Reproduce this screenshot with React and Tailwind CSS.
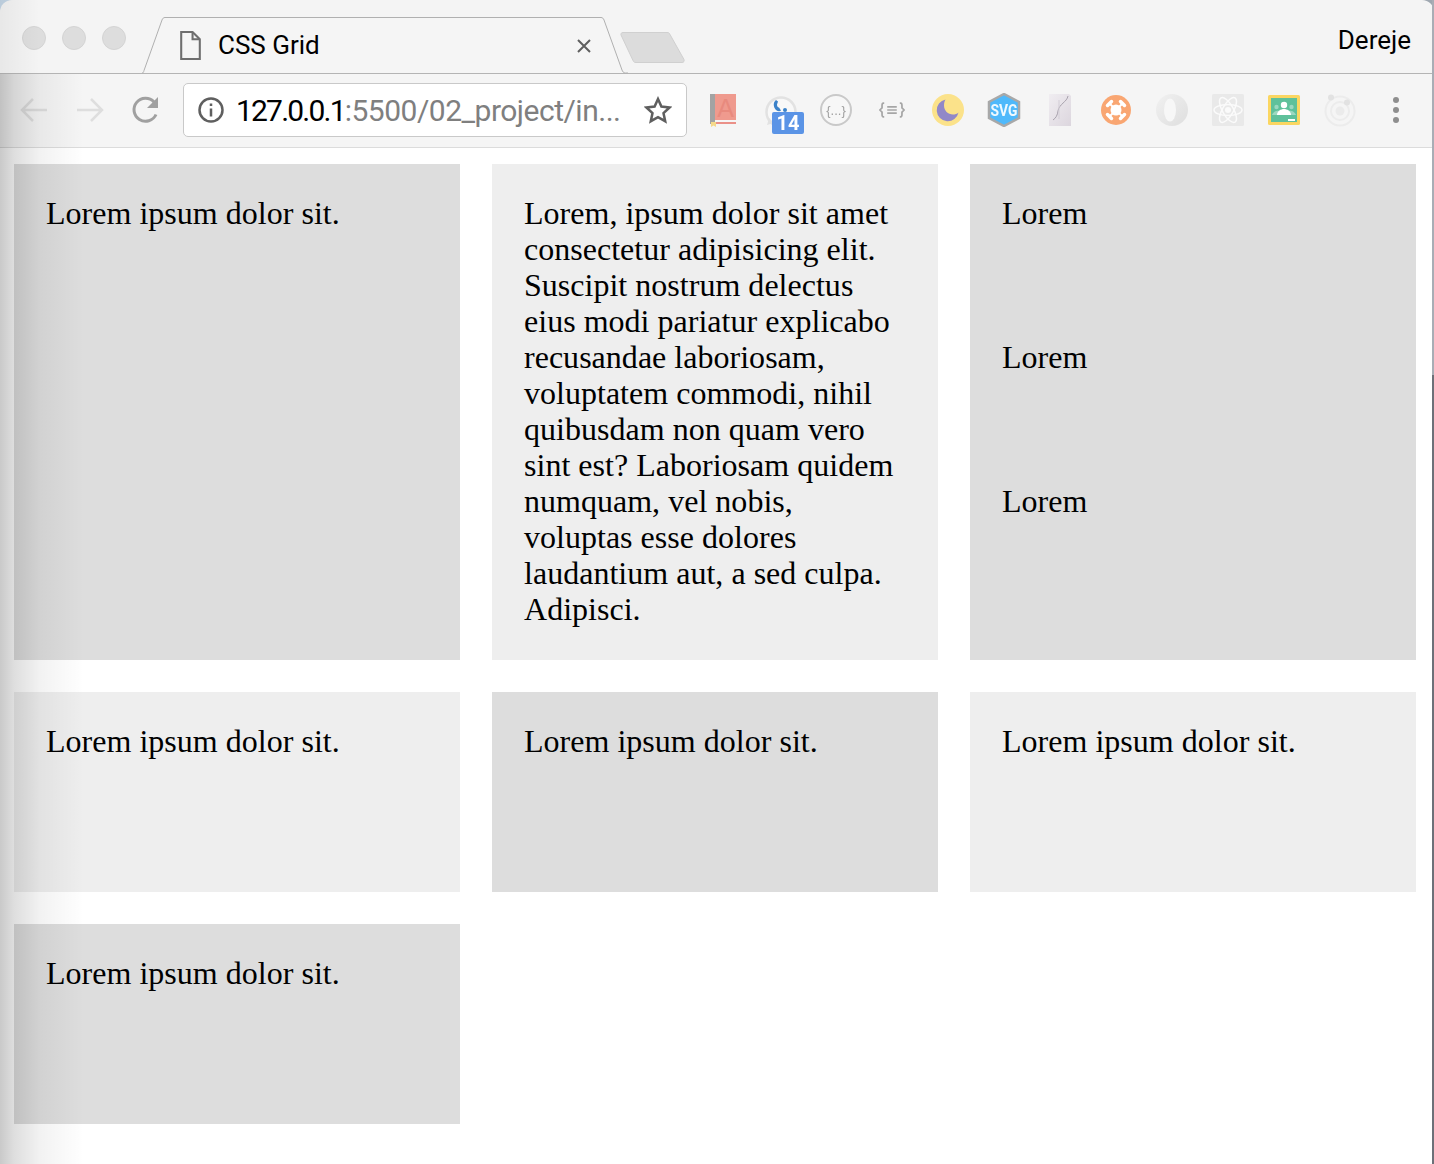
const ui = { fontFamily: 'Roboto, "Liberation Sans", sans-serif' };

function Box({ children }) {
  return <div className="relative flex h-14 w-14 shrink-0 items-center justify-center">{children}</div>;
}

const icons = [
  <svg width="32" height="34" viewBox="0 0 32 34">
    <rect x="5" y="1" width="23" height="28" fill="#ef9a8e" />
    <rect x="2" y="1" width="5" height="30" fill="#a3a3a3" />
    <rect x="7" y="27" width="21" height="2" fill="#f5f5f5" />
    <rect x="7" y="29" width="21" height="2" fill="#ea9088" />
    <path d="M3 29h5v5l-2.500-1.500L3 34z" fill="#f5d98a" />
    <text x="17.500" y="24" textAnchor="middle" fontSize="25" fill="#e88a7e" fontFamily="Liberation Sans">A</text>
  </svg>,
  <div className="relative h-14 w-14">
    <svg className="absolute left-[11px] top-[13px]" width="36" height="36" viewBox="0 0 36 36">
      <circle cx="18" cy="17" r="14.500" fill="#f8f8f8" stroke="#e2e2e2" strokeWidth="2.500" />
      <path d="M4 30l2-7 5 5z" fill="#e2e2e2" />
      <path d="M13 5c-3 2-3 7 0 10 2 1.500 4 1.500 5 .5l-2-3c-1.500 0-2-2-2-3l1-3z" fill="#3b82c9" />
      <circle cx="22" cy="15" r="2" fill="#3b82c9" />
    </svg>
    <span className="absolute left-[20px] top-[30px] flex h-[22px] w-[32px] items-center justify-center rounded-[2px] bg-[#5b94e6] text-[20px] font-bold text-white" style={ui}>14</span>
  </div>,
  <svg width="34" height="34" viewBox="0 0 34 34">
    <circle cx="17" cy="17" r="15" fill="#f7f7f7" stroke="#c9c9c9" strokeWidth="2" />
    <text x="17" y="21.500" textAnchor="middle" fontSize="13" fill="#a0a0a0" fontFamily="Liberation Sans">{"{...}"}</text>
  </svg>,
  <svg width="26" height="18" viewBox="0 0 30 20" fill="none" stroke="#a6a6a6" strokeWidth="2">
    <path d="M6 2H5C3.500 2 3.500 3 3.500 5v2.500L1 10l2.500 2.500V15c0 2 0 3 1.500 3h1" />
    <path d="M24 2h1c1.500 0 1.500 1 1.500 3v2.500L29 10l-2.500 2.500V15c0 2 0 3-1.500 3h-1" />
    <path d="M9.500 6.500h11M9.500 10h11M9.500 13.500h11" />
  </svg>,
  <svg width="34" height="34" viewBox="0 0 34 34">
    <circle cx="17" cy="17" r="16" fill="#fbe28a" />
    <path d="M14.500 6.500a11 11 0 1 0 13 13c-1.500 1.500-3.500 2-5.500 2-5 0-9-4-9-9 0-2.300.5-4.500 1.500-6z" fill="#9188c8" />
  </svg>,
  <svg width="34" height="34" viewBox="0 0 34 34">
    <path d="M17 1l15 8v16l-15 8-15-8V9z" fill="#4fb9fb" stroke="#a8a8a8" strokeWidth="2.500" />
    <text x="17" y="23" textAnchor="middle" fontSize="17" fontWeight="700" fill="#eef9ff" fontFamily="Roboto" textLength="27" lengthAdjust="spacingAndGlyphs">SVG</text>
  </svg>,
  <svg width="24" height="34" viewBox="0 0 24 34">
    <defs>
      <linearGradient id="pg" x1="0" y1="0" x2="1" y2="1">
        <stop offset="0" stopColor="#f0edf1" />
        <stop offset="1" stopColor="#dcd6de" />
      </linearGradient>
    </defs>
    <path d="M1 1h20l2 2v30H1z" fill="url(#pg)" />
    <path d="M20 3c-1 6-9 8-10 15-.5 4-2 7-5 9" fill="none" stroke="#a8a2ad" strokeWidth="1" />
    <path d="M11 7v19" fill="none" stroke="#d2cdd6" strokeWidth="1" />
  </svg>,
  <svg width="32" height="32" viewBox="0 0 32 32">
    <circle cx="16" cy="16" r="15" fill="#f9a672" />
    <g stroke="#fff" strokeLinecap="round">
      <path d="M10 10l12 12M22 10L10 22" strokeWidth="2" />
      <path d="M7.500 11.500l4-4M20.500 7.500l4 4M7.500 20.500l4 4M20.500 24.500l4-4" strokeWidth="3.500" />
    </g>
    <circle cx="16" cy="16" r="5.500" fill="#fff" />
  </svg>,
  <svg width="34" height="34" viewBox="0 0 34 34">
    <defs>
      <linearGradient id="rg" x1="0" y1="0" x2="1" y2="1">
        <stop offset="0" stopColor="#f1f1f1" />
        <stop offset="1" stopColor="#dedede" />
      </linearGradient>
    </defs>
    <circle cx="17" cy="17" r="16" fill="url(#rg)" />
    <ellipse cx="15" cy="17" rx="6" ry="11.500" fill="#f7f7f7" />
  </svg>,
  <svg width="32" height="32" viewBox="0 0 32 32">
    <rect width="32" height="32" rx="1.500" fill="#e9e9e9" />
    <g fill="none" stroke="#fbfbfb" strokeWidth="1.500">
      <ellipse cx="16" cy="16" rx="14" ry="5.500" />
      <ellipse cx="16" cy="16" rx="14" ry="5.500" transform="rotate(60 16 16)" />
      <ellipse cx="16" cy="16" rx="14" ry="5.500" transform="rotate(120 16 16)" />
    </g>
    <circle cx="16" cy="16" r="3" fill="#fbfbfb" />
  </svg>,
  <svg width="32" height="30" viewBox="0 0 32 30">
    <rect width="32" height="30" rx="1.500" fill="#fbd661" />
    <rect x="3" y="3" width="26" height="24" fill="#5fc19b" />
    <circle cx="16" cy="10" r="3.200" fill="#fff" />
    <circle cx="8.500" cy="12" r="2.200" fill="#9bd8c0" />
    <circle cx="23.500" cy="12" r="2.200" fill="#9bd8c0" />
    <path d="M4 20c1-4 6-5 8-4v4zM28 20c-1-4-6-5-8-4v4z" fill="#9bd8c0" />
    <path d="M9 20c0-4 4-6 7-6s7 2 7 6z" fill="#fff" />
    <rect x="20" y="24" width="7" height="2" fill="#fff" />
  </svg>,
  <svg width="34" height="34" viewBox="0 0 34 34">
    <circle cx="17" cy="18" r="14.500" fill="none" stroke="#ececec" strokeWidth="2" />
    <circle cx="17" cy="18" r="9" fill="none" stroke="#ececec" strokeWidth="2" />
    <circle cx="17" cy="18" r="4.500" fill="#ebebeb" />
    <circle cx="8" cy="4.500" r="3" fill="#e2e2e2" />
    <circle cx="24" cy="9.500" r="3" fill="#e2e2e2" />
  </svg>,
  <svg width="8" height="28" viewBox="0 0 8 28" fill="#8e8e8e">
    <circle cx="4" cy="4" r="3" />
    <circle cx="4" cy="14" r="3" />
    <circle cx="4" cy="24" r="3" />
  </svg>,
];

function Card({ gray, className = "", children }) {
  return (
    <div className={`px-8 pb-8 pt-[31px] text-[32px] leading-9 tracking-[0.02px] text-black ${gray ? "bg-[#dddddd]" : "bg-[#eeeeee]"} ${className}`}>
      {children}
    </div>
  );
}

const short = "Lorem ipsum dolor sit.";

export default function App() {
  return (
    <div className="relative flex h-[1164px] w-[1434px] flex-col overflow-hidden bg-[linear-gradient(to_right,#c4d6e6,#9fa7b0)]" style={{ fontFamily: '"Liberation Serif", serif' }}>
      <div className="flex h-[74px] items-end rounded-t-[12px] border-b border-[#b4b4b4] bg-[#f4f4f4]" style={ui}>
        <div className="flex items-center gap-4 self-start pl-[22px] pt-[26px]">
          <span className="h-6 w-6 rounded-full border border-[#d4d4d4] bg-[#dddddd]" />
          <span className="h-6 w-6 rounded-full border border-[#d4d4d4] bg-[#dddddd]" />
          <span className="h-6 w-6 rounded-full border border-[#d4d4d4] bg-[#dddddd]" />
        </div>
        <div className="relative z-10 -mb-px ml-4 flex h-[57px] w-[486px] items-center pl-[37px] pr-[36px]">
          <svg className="absolute inset-0" width="486" height="57" viewBox="0 0 486 57" fill="none">
            <path d="M-1 56h1c1.500 0 1.500-1 2-2.500L20 3c.5-1.500 1.500-2.500 3-2.500h436c1.500 0 2.500 1 3 2.500l18 50c.5 1.500 1.500 3 3.500 3h2.500" fill="#f5f5f5" stroke="#b0b0b0" strokeWidth="1" />
          </svg>
          <svg className="relative mr-[16px] shrink-0" width="23" height="31" viewBox="0 0 22 30" fill="none" stroke="#6e6e6e" strokeWidth="2">
            <path d="M2 2h11l7 7v19H2z" />
            <path d="M13 2v7h7" />
          </svg>
          <span className="relative text-[26px] text-black">CSS Grid</span>
          <svg className="relative ml-auto" width="16" height="16" viewBox="0 0 16 16" stroke="#5f5f5f" strokeWidth="2">
            <path d="M2 2l12 12M14 2L2 14" />
          </svg>
        </div>
        <svg className="mb-[10px] -ml-[8px] shrink-0" width="66" height="31" viewBox="0 0 66 31">
          <path d="M3 0.500h44c1.500 0 2.500.5 3 2l14 25c.5 1.500 0 3-2 3H16c-1.500 0-2.500-.5-3-2L1 3c-.5-1.500.5-2.500 2-2.500z" fill="#dcdcdc" stroke="#d0d0d0" />
        </svg>
        <span className="ml-auto self-start pr-[23px] pt-[21px] text-[26px] text-black">Dereje</span>
      </div>

      <div className="flex h-[74px] items-center border-b border-[#dcdcdc] bg-[#f5f5f5] pb-px pl-[6px]" style={ui}>
        <Box>
          <svg width="28" height="26" viewBox="0 0 28 26" fill="none" stroke="#dedede" strokeWidth="2.500">
            <path d="M27 13H3M13 2L2 13l11 11" />
          </svg>
        </Box>
        <Box>
          <svg width="28" height="26" viewBox="0 0 28 26" fill="none" stroke="#dedede" strokeWidth="2.500">
            <path d="M1 13h24M15 2l11 11-11 11" />
          </svg>
        </Box>
        <Box>
          <svg width="30" height="30" viewBox="0 0 30 30" fill="none" stroke="#a0a0a0" strokeWidth="3">
            <path d="M25 19.500A11.500 11.500 0 1 1 23 7" />
            <path d="M27 2v11H16z" fill="#a0a0a0" stroke="none" />
          </svg>
        </Box>
        <div className="ml-[9px] flex h-[54px] w-[504px] shrink-0 items-center rounded-[5px] border border-[#c9c9c9] bg-white pl-[14px]">
          <svg className="shrink-0" width="26" height="26" viewBox="0 0 26 26" fill="none" stroke="#5f5f5f" strokeWidth="2.500">
            <circle cx="13" cy="13" r="11.500" />
            <path d="M13 11.500v8M13 6.500v2.500" />
          </svg>
          <span className="ml-[12px] w-[386px] shrink-0 whitespace-nowrap text-[30px] tracking-[-0.5px] text-[#7f7f7f]">
            <span className="tracking-[-1.8px] text-black">127.0.0.1</span>:5500/02_project/in...
          </span>
          <svg className="ml-[22px] shrink-0" width="28" height="28" viewBox="0 0 28 28" fill="none" stroke="#5f5f5f" strokeWidth="2.500" strokeLinejoin="miter">
            <path d="M14 3l3.400 7.600 8.100.9-6 5.600 1.700 8.100L14 21.100 6.800 25.200l1.700-8.100-6-5.600 8.100-.9z" />
          </svg>
        </div>
        <div className="ml-[9px] flex items-center blur-[0.5px]">
          {icons.map((icon, i) => (
            <Box key={i}>{icon}</Box>
          ))}
        </div>
      </div>

      <div className="grid flex-1 grid-cols-[repeat(3,446px)] grid-rows-[496px_200px_200px] content-start gap-8 bg-white pl-[14px] pt-4">
        <Card gray>{short}</Card>
        <Card>
          Lorem, ipsum dolor sit amet consectetur adipisicing elit. Suscipit nostrum delectus eius modi pariatur explicabo recusandae laboriosam, voluptatem commodi, nihil quibusdam non quam vero sint est? Laboriosam quidem numquam, vel nobis, voluptas esse dolores laudantium aut, a sed culpa. Adipisci.
        </Card>
        <Card gray className="flex flex-col gap-[108px]">
          <p>Lorem</p>
          <p>Lorem</p>
          <p>Lorem</p>
        </Card>
        <Card>{short}</Card>
        <Card gray>{short}</Card>
        <Card>{short}</Card>
        <Card gray>{short}</Card>
      </div>

      <div className="pointer-events-none absolute left-0 top-0 h-[74px] w-[40px] bg-[linear-gradient(to_right,rgba(0,0,0,0.05),transparent)]" />
      <div className="pointer-events-none absolute bottom-0 left-0 top-[74px] w-[84px] bg-[linear-gradient(to_right,rgba(0,0,0,0.21),rgba(0,0,0,0.13)_14px,rgba(0,0,0,0.05)_40px,transparent_84px)]" />
      <div className="pointer-events-none absolute inset-y-0 right-0 w-[2px] bg-[linear-gradient(to_bottom,#a9adb5_375px,#6d7078_375px)]" />
    </div>
  );
}
